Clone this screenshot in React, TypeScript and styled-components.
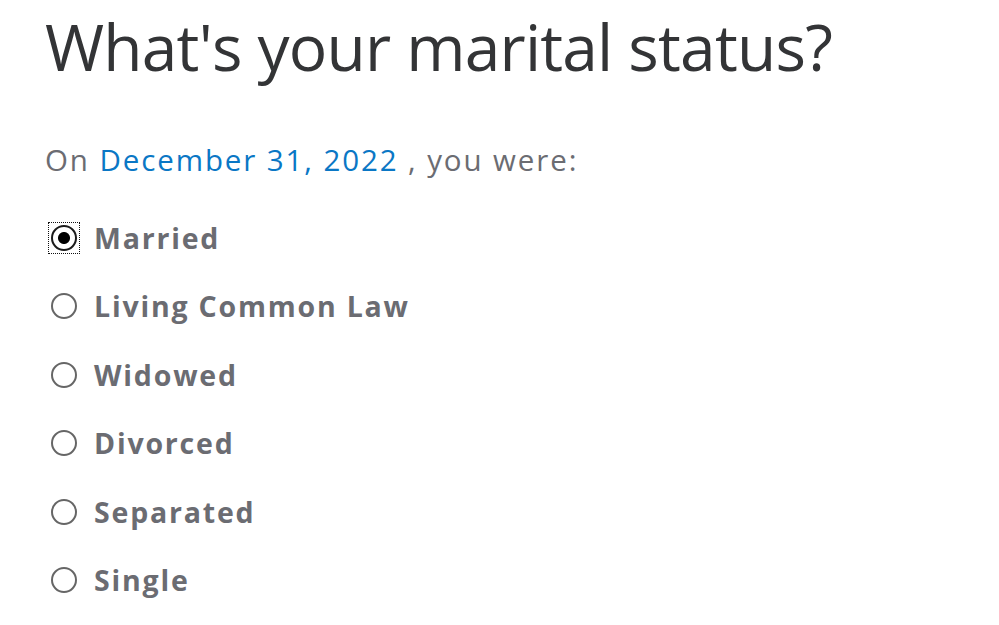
import React, { useState } from "react";
import styled, { createGlobalStyle } from "styled-components";

const Global = createGlobalStyle`
  html, body { margin: 0; padding: 0; background: #ffffff; }
  body { font-family: "Open Sans", Lato, sans-serif; }
`;

const Page = styled.main`
  padding: 8px 0 0 45px;
`;

const Title = styled.h1`
  margin: 0;
  font-family: "Open Sans", sans-serif;
  font-weight: 400;
  font-size: 64px;
  letter-spacing: -0.77px;
  line-height: 78px;
  color: #333436;
`;

const Lead = styled.p`
  margin: 54px 0 0 0;
  font-size: 29.5px;
  letter-spacing: 1.9px;
  line-height: 40px;
  color: #6b6c72;
`;

const DateLink = styled.span`
  color: #0a77c5;
`;

const Options = styled.fieldset`
  border: 0;
  margin: 38px 0 0 0;
  padding: 0;
  display: flex;
  flex-direction: column;
  gap: 28.4px;
`;

const Option = styled.label`
  display: flex;
  align-items: center;
  gap: 14px;
  height: 40px;
  font-size: 28.5px;
  letter-spacing: 1.8px;
  font-weight: 700;
  color: #6b6c72;
  cursor: pointer;
`;

const RadioFrame = styled.span<{ $focused: boolean }>`
  display: inline-flex;
  flex: none;
  margin-left: 3px;
  padding: 2px;
  border: 1.5px dotted ${(p) => (p.$focused ? "#111" : "transparent")};
`;

const Radio = styled.input.attrs({ type: "radio" })`
  appearance: none;
  margin: 0;
  width: 26px;
  height: 26px;
  border: 2px solid #666;
  border-radius: 50%;
  box-sizing: border-box;
  background: #fff;
  outline: none;
  &:checked {
    border-color: #1a1a1a;
    background: radial-gradient(circle, #000 0 5.5px, #fff 6.5px);
  }
`;

const options = [
  "Married",
  "Living Common Law",
  "Widowed",
  "Divorced",
  "Separated",
  "Single",
];

export default function App() {
  const [value, setValue] = useState("Married");
  return (
    <Page>
      <Global />
      <Title>What's your marital status?</Title>
      <Lead>
        On <DateLink>December 31, 2022</DateLink> , you were:
      </Lead>
      <Options>
        {options.map((o) => (
          <Option key={o}>
            <RadioFrame $focused={value === o}>
              <Radio
                name="status"
                checked={value === o}
                onChange={() => setValue(o)}
              />
            </RadioFrame>
            {o}
          </Option>
        ))}
      </Options>
    </Page>
  );
}
